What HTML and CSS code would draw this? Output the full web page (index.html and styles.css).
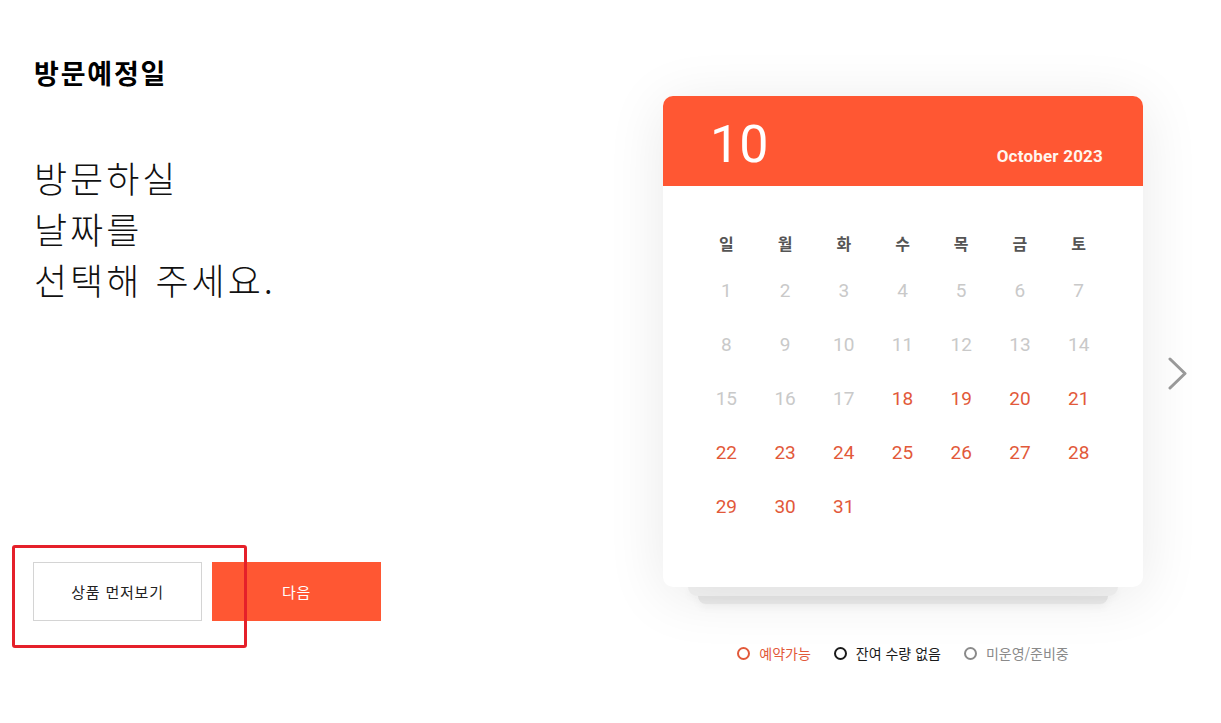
FILE: index.html
```html
<!DOCTYPE html>
<html lang="ko">
<head>
<meta charset="utf-8">
<title>방문예정일</title>
<link rel="stylesheet" href="styles.css">
</head>
<body>
<div class="page">
  <section class="left">
    <h1 class="title">방문예정일</h1>
    <p class="lead">방문하실<br>날짜를<br>선택해 주세요.</p>
    <div class="actions">
      <button class="btn btn-outline">상품 먼저보기</button>
      <button class="btn btn-primary">다음</button>
      <div class="highlight"></div>
    </div>
  </section>
  <section class="right">
    <div class="cal-col">
      <div class="card">
        <div class="card-head">
          <span class="day">10</span>
          <span class="month">October 2023</span>
        </div>
        <div class="card-body">
          <div class="grid weekdays">
            <span>일</span><span>월</span><span>화</span><span>수</span><span>목</span><span>금</span><span>토</span>
          </div>
          <div class="grid dates">
            <span class="off">1</span><span class="off">2</span><span class="off">3</span><span class="off">4</span><span class="off">5</span><span class="off">6</span><span class="off">7</span>
            <span class="off">8</span><span class="off">9</span><span class="off">10</span><span class="off">11</span><span class="off">12</span><span class="off">13</span><span class="off">14</span>
            <span class="off">15</span><span class="off">16</span><span class="off">17</span><span class="on">18</span><span class="on">19</span><span class="on">20</span><span class="on">21</span>
            <span class="on">22</span><span class="on">23</span><span class="on">24</span><span class="on">25</span><span class="on">26</span><span class="on">27</span><span class="on">28</span>
            <span class="on">29</span><span class="on">30</span><span class="on">31</span>
          </div>
        </div>
      </div>
      <div class="layer layer1"></div>
      <div class="layer layer2"></div>
      <ul class="legend">
        <li class="lg-avail"><i></i>예약가능</li>
        <li class="lg-none"><i></i>잔여 수량 없음</li>
        <li class="lg-closed"><i></i>미운영/준비중</li>
      </ul>
    </div>
    <button class="next" aria-label="다음 달">
      <svg width="20" height="33" viewBox="0 0 20 33"><polyline points="2,2 17,16.5 2,31" fill="none" stroke="#9b9b9b" stroke-width="3" stroke-linecap="round" stroke-linejoin="round"/></svg>
    </button>
  </section>
</div>
</body>
</html>
```
FILE: styles.css
```css
* { box-sizing: border-box; }
html, body { margin: 0; padding: 0; background: #fff; }
body {
  font-family: "Noto Sans CJK KR", "Noto Sans", sans-serif;
  color: #111;
  width: 1221px;
  height: 723px;
  overflow: hidden;
}
.page {
  display: flex;
  align-items: flex-start;
}
.left {
  width: 663px;
  padding: 57px 0 0 34px;
}
.title {
  margin: 0;
  font-size: 27px;
  line-height: 32px;
  font-weight: 700;
  color: #000;
  letter-spacing: 1.8px;
}
.lead {
  margin: 63px 0 0;
  font-size: 36px;
  line-height: 51px;
  font-weight: 300;
  color: #111;
  letter-spacing: 3px;
}
.actions {
  position: relative;
  display: flex;
  gap: 10px;
  margin-top: 257px;
  margin-left: -1px;
}
.btn {
  width: 169px;
  height: 59px;
  font-family: "Noto Sans CJK KR", sans-serif;
  font-size: 15px;
  letter-spacing: 0.8px;
  border-radius: 0;
  cursor: pointer;
}
.btn-outline {
  background: #fff;
  border: 1px solid #d4d4d4;
  color: #222;
}
.btn-primary {
  background: #ff5733;
  border: 0;
  color: #fff;
}
.highlight {
  position: absolute;
  left: -21px;
  top: -17px;
  width: 235px;
  height: 103px;
  border: 3px solid #e5202a;
  border-radius: 3px;
  pointer-events: none;
}
.right {
  display: flex;
  align-items: flex-start;
  gap: 25px;
  padding-top: 96px;
}
.cal-col {
  width: 480px;
  display: flex;
  flex-direction: column;
}
.card {
  position: relative;
  z-index: 2;
  background: #fff;
  border-radius: 10px;
  overflow: hidden;
  height: 491px;
  box-shadow: 0 8px 60px rgba(0, 0, 0, 0.09);
}
.card-head {
  height: 90px;
  background: #ff5733;
  color: #fff;
  display: flex;
  justify-content: space-between;
  align-items: baseline;
  padding: 23px 40px 0 47px;
  font-family: Roboto, "Noto Sans", sans-serif;
}
.day {
  font-size: 52px;
  line-height: 52px;
  font-weight: 400;
}
.month {
  font-size: 17px;
  font-weight: 700;
  letter-spacing: 0.2px;
  color: #fff6ef;
}
.card-body {
  padding: 36px 35px 0 34px;
}
.grid {
  display: grid;
  grid-template-columns: repeat(7, 1fr);
  text-align: center;
}
.weekdays span {
  height: 42px;
  line-height: 42px;
  font-size: 16px;
  font-weight: 700;
  color: #555;
}
.dates span {
  height: 54px;
  line-height: 54px;
  font-family: Roboto, "Noto Sans", sans-serif;
  font-size: 19px;
}
.dates .off { color: #c9c9c9; }
.dates .on { color: #e2593a; }
.layer {
  position: relative;
  border-radius: 0 0 10px 10px;
}
.layer1 {
  z-index: 1;
  height: 9px;
  margin: 0 25px;
  background: #f4f4f4;
  box-shadow: 0 3px 8px rgba(0, 0, 0, 0.04);
}
.layer2 {
  height: 8px;
  margin: 0 35px;
  background: #ececec;
  box-shadow: 0 3px 8px rgba(0, 0, 0, 0.05);
}
.legend {
  list-style: none;
  margin: 39px 0 0;
  padding: 0;
  display: flex;
  justify-content: center;
  gap: 23px;
  font-size: 14px;
  line-height: 20px;
}
.legend li {
  display: flex;
  align-items: center;
  gap: 9px;
}
.legend i {
  display: block;
  width: 13px;
  height: 13px;
  border-radius: 50%;
  border: 2.5px solid currentColor;
}
.lg-avail { color: #e2593a; }
.lg-none { color: #1a1a1a; }
.lg-closed { color: #8a8a8a; }
.next {
  margin-top: 261px;
  padding: 0;
  border: 0;
  background: transparent;
  width: 20px;
  height: 33px;
  cursor: pointer;
}
.next svg { display: block; }
```
